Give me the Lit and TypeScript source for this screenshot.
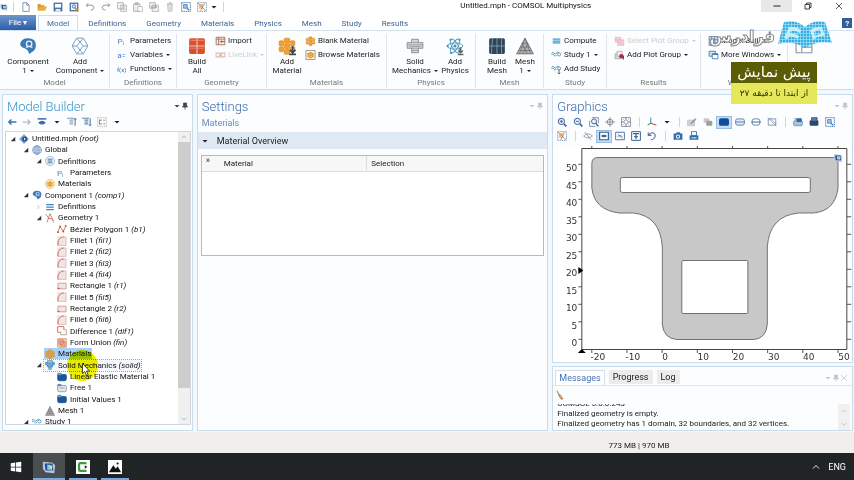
import { LitElement, html, svg, css, nothing } from "lit";
import { customElement, property } from "lit/decorators.js";
import { classMap } from "lit/directives/class-map.js";

/* Icons are drawn on a 16 x 16 canvas. */
const blocks = svg`<g fill="#f0a030" stroke="#d07f18" stroke-width=".5"><rect x="5.5" y="1" width="5" height="4.4" rx="1"/><rect x="1" y="3.4" width="4" height="4.4" rx="1"/><rect x="11" y="3.4" width="4" height="4.4" rx="1"/><rect x="5.5" y="6" width="5" height="4.4" rx="1"/><rect x="1" y="8.6" width="4" height="4.4" rx="1"/><rect x="11" y="8.6" width="4" height="4.4" rx="1"/><rect x="5.5" y="11" width="5" height="4.4" rx="1"/></g>`;
const waves = svg`<g fill="none" stroke="#3f8fb8" stroke-width="1.3"><path d="M0 8q2-4 4 0t4 0"/><path d="M0 5q2-3 4 0t4 0 4 0"/><circle cx="12" cy="7" r="2.6"/></g>`;
const fillet = svg`<path d="M1.500 15V9Q3 1.500 10 1.500h4.500V15z" fill="#efe6e4" stroke="#c9a9a2"/><path d="M1.500 15V10Q3 2 11 1.500" fill="none" stroke="#cf6a58" stroke-width="1.400"/><path d="M1 1.500h7M1.500 1v7" stroke="#dcc4be"/>`;
const domain = svg`<path d="M1 4q0-2 2-2h3l2 2h5q2 0 2 2v5q0 3-3 3H4q-3 0-3-3z" fill="#17589c" stroke="#0d4480"/><path d="M1 2h6v3H1z" fill="#6f9fcc"/>`;
const person = svg`<path d="M1 6q1-5 7-5 7 0 7 6 0 4-3 6l-3 2q-1-4-4-5-4-1-4-4z" fill="#3d78b8"/><circle cx="9" cy="6" r="2.400" fill="none" stroke="#e6f0fa" stroke-width="1.200"/><path d="M6 9h2M10 9h2" stroke="#e6f0fa" stroke-width="1"/>`;

const ICONS: Record<string, unknown> = {
  doc: svg`<path d="M3 1h6l4 4v10H3zM9 1v4h4" fill="#fff" stroke="#5f7f9f" stroke-width="1.2"/>`,
  open: svg`<path d="M1 13V3h4l2 2h5v2" fill="#d8982c"/><path d="M1 14l3-7h12l-3 7z" fill="#e9ab3d"/>`,
  save: svg`<path d="M1 1h14v14H1z" fill="#3c6cab"/><path d="M3 3h10v6H3z" fill="#fff"/><path d="M4 11h8v4H4z" fill="#dfe8f4"/>`,
  saveas: svg`<path d="M1 1h14v14H1z" fill="#3c6cab"/><path d="M3 3h10v10H3z" fill="#fff"/><circle cx="8" cy="7" r="3" fill="#b9d2ee" stroke="#3c6cab"/><path d="M9 9l6 6" stroke="#d08a2a" stroke-width="2.4"/>`,
  undo: svg`<path d="M5 2L2 5l3 3M2 5h7q5 0 5 4t-5 4" fill="none" stroke="#8c9098" stroke-width="1.5"/>`,
  redo: svg`<path d="M11 2l3 3-3 3M14 5H7q-5 0-5 4t5 4" fill="none" stroke="#8c9098" stroke-width="1.5"/>`,
  copy: svg`<path d="M1 1h9v10H1zM6 5h9v10H6z" fill="#f4f4f4" stroke="#a3a3a3" stroke-width="1.2"/><path d="M8 8h5M8 10h5M8 12h5" stroke="#b5b5b5"/>`,
  paste: svg`<path d="M1 3h10v12H1zM4 1h4v3H4z" fill="#eee" stroke="#a3a3a3" stroke-width="1.2"/><path d="M8 7h7v8H8z" fill="#fff" stroke="#a3a3a3"/>`,
  duplicate: svg`<path d="M1 1h9v9H1zM5 5h10v10H5z" fill="#f4f4f4" stroke="#a3a3a3" stroke-width="1.2"/><path d="M3 8h9l-2-2m2 2l-2 2" fill="none" stroke="#777"/>`,
  trash: svg`<path d="M4 4h8l-1 11H5z" fill="#ddd" stroke="#b5b5b5"/><path d="M3 3h10M6 1h4" stroke="#b5b5b5" stroke-width="1.4"/>`,
  select: svg`<path d="M1 1h14v14H1z" fill="none" stroke="#2f6db3" stroke-width="1.4" stroke-dasharray="2 1"/><path d="M4 4h6v6H4z" fill="#9dbfe6" stroke="#2f6db3"/><path d="M9 8l5 5-3 0z" fill="#245a9c"/>`,
  deselect: svg`<path d="M1 1h14v14H1z" fill="none" stroke="#5a84b8" stroke-width="1.2" stroke-dasharray="2 1"/><path d="M3 3h7v8H3z" fill="#e2c597"/><path d="M2 2l12 12M12 2L6 14" stroke="#c07a3a" stroke-width="1.2"/>`,
  param: svg`<text x="0" y="12" font-size="13" fill="#4a83bd">P</text><text x="8" y="15" font-size="9" fill="#4a83bd">i</text>`,
  vars: svg`<text x="0" y="12" font-size="12" fill="#4a83bd">a=</text>`,
  fx: svg`<text x="-1" y="12" font-size="10" fill="#2f6fb0">f(x)</text>`,
  importer: svg`<path d="M1 2h14v12H1zM1 5h14M5 2v12" fill="#fbe9e4" stroke="#a3705f" stroke-width="1.4"/><path d="M15 9H8l2-2M8 9l2 2" fill="none" stroke="#b5543c" stroke-width="1.6"/>`,
  link: svg`<path d="M1 5h6v6H1zM9 5h6v6H9zM5 8h6" fill="none" stroke="#e6b9b2" stroke-width="1.8"/>`,
  blocks,
  browse: svg`<path d="M.7.7h14.6v14.6H.7z" fill="#fff6e4" stroke="#8a8a8a" stroke-width="1.3"/><g transform="translate(2.5 2.5) scale(.7)">${blocks}</g>`,
  compute: svg`<path d="M2 4h12v2H2zM2 7h12v2H2zM2 10h12v2H2z" fill="#3b9ccc"/>`,
  waves,
  addwaves: svg`${waves}<path d="M12 9v7m-2-2l2 2 2-2" fill="none" stroke="#555" stroke-width="1.4"/>`,
  plotoff: svg`<path d="M1 2h9v8H1zM5 6h10v9H5z" fill="#f3c9d3" stroke="#e6b4c0"/>`,
  plotadd: svg`<path d="M1 6h9v8H1z" fill="#ddd" stroke="#888"/><path d="M4 2h8v8H4z" fill="#f4eef0" stroke="#999"/><circle cx="11" cy="10" r="3.6" fill="#c2264c"/><path d="M14 9v6" stroke="#444" stroke-width="2"/>`,
  grid: svg`<path d="M1 1h14v14H1zM5 1v14M10 1v14M1 6h14M1 11h14" fill="#dbe8f5" stroke="#54789e" stroke-width="1.3"/>`,
  windows: svg`<path d="M1 2h10v8H1z" fill="#cfe0f1" stroke="#3f74ab" stroke-width="1.3"/><path d="M6 6h9v8H6z" fill="#fff" stroke="#3f74ab" stroke-width="1.3"/><path d="M6 7h9" stroke="#3f74ab" stroke-width="2"/>`,
  desktop: svg`<path d="M1 1h14v13H1z" fill="#fff" stroke="#8d979f"/><path d="M1 4h14M6 4v10M6 9h9" stroke="#8d979f"/>`,
  person,
  addcomp: svg`<g fill="none" stroke="#7196bd" stroke-width=".8"><path d="M5 1h6l4 7-4 7H5L1 8z"/><path d="M5 1l6 7-6 7M11 1L5 8l6 7M1 8h4M11 8h4"/></g>`,
  build: svg`<rect x="1" y="1" width="14" height="14" rx="1.5" fill="#d9502e"/><path d="M8 1v14M1 8h14" stroke="#f4c3b4" stroke-width="1"/><path d="M2 3h5M2 10h5M9 3h5M9 10h5" stroke="#e98063" stroke-width="1"/>`,
  addmat: svg`${blocks}<path d="M13 8v6m-2.500-2.500l2.500 2.500 2.500-2.500M10 15.500h6" fill="none" stroke="#3c4a58" stroke-width="1.500"/>`,
  solid: svg`<path d="M5 2h6v3h4v5h-4v4H5v-4H1V5h4z" fill="#d4d6d8" stroke="#85898d" stroke-width=".8"/><path d="M5 5h6M1 7h14M3 8.500h10M5 10h6M5 12h6" stroke="#909498" stroke-width=".7"/>`,
  solidblue: svg`<path d="M4 1h8v3h3v4h-3v3h-2v4H6v-4H4V8H1V4h3z" fill="#9fc6e2" stroke="#357fae"/><path d="M1 5h14M3 8h10M5 11h6" stroke="#357fae" stroke-width="1.300"/>`,
  atom: svg`<g fill="none" stroke="#4b9ac0" stroke-width=".8"><ellipse cx="8" cy="8" rx="7" ry="2.700"/><ellipse cx="8" cy="8" rx="7" ry="2.700" transform="rotate(60 8 8)"/><ellipse cx="8" cy="8" rx="7" ry="2.700" transform="rotate(120 8 8)"/></g><g fill="#3f8fb8"><circle cx="8" cy="8" r="1.400"/><circle cx="4" cy="2.500" r="1"/><circle cx="12" cy="2.500" r="1"/><circle cx="1.500" cy="8" r="1"/><circle cx="4.500" cy="14" r="1"/></g><path d="M13 9v5m-2-2l2 2 2-2M10.500 15.500h5" fill="none" stroke="#59636c" stroke-width="1.300"/>`,
  buildmesh: svg`<rect x="1" y="1" width="14" height="14" rx="1.500" fill="#2c455c"/><path d="M8 1v14M1 8h14M4 1l-1 14M12 1v14" stroke="#8fa6ba" stroke-width=".7"/>`,
  mesh: svg`<path d="M8 1l7.500 14H.5z" fill="#b2b2b2" stroke="#747474" stroke-width=".8"/><path d="M5.500 5.700h5M3.800 9h8.500M2 12h12M8 1L3 15M8 1l5 14M5.500 5.700L10 15M10.500 5.700L6 15" fill="none" stroke="#696969" stroke-width=".6"/>`,
  root: svg`<path d="M8 1l7 7-7 7-7-7z" fill="#88abd0" stroke="#3a6da5"/><circle cx="9" cy="8" r="4" fill="#204f8c"/><path d="M8 6l3 2-3 2z" fill="#fff"/>`,
  globe: svg`<circle cx="8" cy="8" r="7" fill="#dfe9f5" stroke="#5d7fb1"/><path d="M1 8h14M8 1v14M2.500 4.500h11M2.500 11.500h11" stroke="#5d7fb1" stroke-width=".8"/><ellipse cx="8" cy="8" rx="3.500" ry="7" fill="none" stroke="#5d7fb1" stroke-width=".8"/>`,
  defsround: svg`<circle cx="8" cy="8" r="7.200" fill="#fff" stroke="#6c8fb9"/><path d="M4 5h8M4 8h8M4 11h8" stroke="#2a6db0" stroke-width="1.600"/>`,
  defs: svg`<path d="M2 4h12M2 8h12M2 12h12" stroke="#3d87b5" stroke-width="2"/>`,
  matround: svg`<circle cx="8" cy="8" r="7.200" fill="#fff3d6" stroke="#e2a43f"/><g transform="translate(3 3) scale(.63)">${blocks}</g>`,
  geom: svg`<path d="M3 15L8 1l6 14M5 9q5-2 9 3M1 2l5 6" fill="none" stroke="#d2583d" stroke-width="1.200"/>`,
  bezier: svg`<path d="M1 13L5 4l5 8 4-9" fill="none" stroke="#b5533f" stroke-width="1.200"/><g fill="#c34b32"><circle cx="1.800" cy="13" r="1.500"/><circle cx="5" cy="4" r="1.500"/><circle cx="10" cy="12" r="1.500"/><circle cx="14" cy="3" r="1.500"/></g>`,
  fillet,
  rect: svg`<path d="M1.500 3.500h13v9h-13z" fill="#f1e4e1" stroke="#cf8a7d" stroke-width="1.200"/><path d="M1 12h3" stroke="#c34b32" stroke-width="2"/>`,
  diff: svg`<path d="M1 1h10v9H1z" fill="#fff" stroke="#d0604a" stroke-width="1.400"/><path d="M6 10v4h9V6h-4" fill="#fff" stroke="#a78d88" stroke-width="1.200"/>`,
  union: svg`<path d="M1 1h14v14H1z" fill="#f3d2b4" stroke="#d07f5b"/><path d="M3 3h7v7H3zM6 6h7v7H6z" fill="#efb7a3" stroke="#c9654d"/>`,
  domain,
  free: svg`<path d="M1 4q0-2 2-2h3l2 2h5q2 0 2 2v5q0 3-3 3H4q-3 0-3-3z" fill="#dfe6ee" stroke="#7b8a9b" stroke-width="1.200"/><path d="M1 2h6v3H1z" fill="#6c83a0"/><path d="M4 8h8" stroke="#7b8a9b"/>`,
  left: svg`<path d="M15 8H3m4-4L3 8l4 4" fill="none" stroke="#3a77b5" stroke-width="2.400"/>`,
  right: svg`<path d="M1 8h12M9 4l4 4-4 4" fill="none" stroke="#b9bcc0" stroke-width="2"/>`,
  eyebar: svg`<path d="M1 3h14" stroke="#386fa8" stroke-width="2.400"/><path d="M2 9q6-6 12 0-6 6-12 0z" fill="#386fa8"/>`,
  treeup: svg`<path d="M0 2h11M4 5h6M4 8h6M4 11h6" stroke="#8494a7" stroke-width="1.600"/><path d="M13 14V2m-2 2l2-2 2 2" fill="none" stroke="#3a6aa0" stroke-width="1.500"/>`,
  treedown: svg`<path d="M0 2h11M4 5h6M4 8h6M4 11h6" stroke="#6484a7" stroke-width="1.800"/><path d="M13 2v12m-2-2l2 2 2-2" fill="none" stroke="#3a6aa0" stroke-width="1.500"/>`,
  treebox: svg`<path d="M1 1h14v14H1z" fill="#fff" stroke="#9a9a9a" stroke-dasharray="2 1"/><path d="M4 4v8M4 5h4M4 11h4M10 5h3M10 11h3" stroke="#777" stroke-width="1.400"/>`,
  zoomin: svg`<circle cx="7" cy="7" r="5" fill="#e9f1fa" stroke="#35609a" stroke-width="1.600"/><path d="M11 11l4 4" stroke="#35609a" stroke-width="2.400"/><path d="M4.500 7h5M7 4.500v5" stroke="#35609a" stroke-width="1.400"/>`,
  zoomout: svg`<circle cx="7" cy="7" r="5" fill="#e9f1fa" stroke="#35609a" stroke-width="1.600"/><path d="M11 11l4 4" stroke="#35609a" stroke-width="2.400"/><path d="M4.500 7h5" stroke="#35609a" stroke-width="1.400"/>`,
  zoombox: svg`<path d="M1 6v9h9M5 1h10v9" fill="none" stroke="#5e7796" stroke-width="1.200"/><circle cx="8" cy="7" r="4" fill="#e9f1fa" stroke="#35609a" stroke-width="1.500"/><path d="M11 10l4 5" stroke="#35609a" stroke-width="2"/>`,
  target: svg`<circle cx="8" cy="8" r="4.500" fill="none" stroke="#6f7c8b" stroke-width="1.300"/><path d="M8 0v16M0 8h16" stroke="#6f7c8b" stroke-width="1.200"/>`,
  extents: svg`<path d="M1 1h14v14H1z" fill="#fff" stroke="#6f7c8b" stroke-width="1.300"/><path d="M8 1v5M8 10v5M1 8h5M10 8h5" stroke="#6f7c8b" stroke-width="1.600"/><path d="M4 4l2 2M12 4l-2 2M4 12l2-2M12 12l-2-2" stroke="#6f7c8b" stroke-width="1.300"/>`,
  axes: svg`<path d="M6 1v9" stroke="#3b79b5" stroke-width="1.500"/><path d="M6 10l-5 3" stroke="#3a9a4d" stroke-width="1.800"/><path d="M6 10l9 3" stroke="#c2413b" stroke-width="1.600"/>`,
  pencil: svg`<path d="M1 5h11v9H1z" fill="#d5d5d5" stroke="#b5b5b5"/><path d="M5 10l8-8 2 2-8 8z" fill="#9a9a9a"/>`,
  stack: svg`<rect x="1" y="2" width="9" height="7" rx="2" fill="#c9c9c9"/><rect x="5" y="6" width="10" height="8" rx="2" fill="#9f9f9f"/>`,
  solidbox: svg`<rect x="0" y="2" width="16" height="12" rx="3" fill="#0f4f97"/>`,
  linebox: svg`<rect x="1" y="3" width="14" height="10" rx="3" fill="#dfeaf6" stroke="#4a6f9b" stroke-width="1.300"/><path d="M1 8h14" stroke="#4a6f9b" stroke-width="1.300"/>`,
  pointbox: svg`<rect x="2" y="3" width="12" height="10" rx="3" fill="#fff" stroke="#4a6f9b" stroke-width="1.300"/><path d="M0 8h16" stroke="#4a6f9b" stroke-width="1.600"/>`,
  nobox: svg`<path d="M2 3h12v10H2z" fill="none" stroke="#75879d" stroke-width="1.300"/><path d="M1 1l14 14M4 1l11 11" stroke="#75879d"/>`,
  scene: svg`<rect x="1" y="6" width="14" height="8" rx="2" fill="#a9c3df" stroke="#4a77aa"/><path d="M6 2h8v6H6z" fill="#2f68ab"/><path d="M2 3h4v3" fill="none" stroke="#4a77aa" stroke-width="1.500"/>`,
  scenedark: svg`<rect x="1" y="5" width="14" height="9" rx="2" fill="#2d4767"/><path d="M4 1h9v6H4z" fill="#5a7da8" stroke="#243a56"/>`,
  noeye: svg`<path d="M1 8q7-7 14 0-7 6-14 0z" fill="none" stroke="#8f8f8f" stroke-width="1.300"/><path d="M3 2l10 12" stroke="#8f8f8f" stroke-width="1.500"/>`,
  eyebox: svg`<path d="M1 2h14v12H1z" fill="#fff" stroke="#345f92" stroke-width="1.800"/><path d="M3 8q5-4 10 0-5 4-10 0z" fill="#345f92"/>`,
  slashbox: svg`<path d="M1 2h14v12H1z" fill="#fff" stroke="#5676a5" stroke-width="1.600"/><path d="M4 9q4-4 8 0M5 5l6 7" fill="none" stroke="#5676a5" stroke-width="1.300"/>`,
  screenbox: svg`<path d="M1 1h14v14H1z" fill="#fff" stroke="#42658f" stroke-width="1.600"/><path d="M3 4h10M8 5v8M5 9h6" stroke="#42658f" stroke-width="2"/>`,
  reset: svg`<path d="M2 2v5h5M3 6q3-4 7-3 4 2 3 6-2 5-7 5" fill="none" stroke="#5b6fa5" stroke-width="1.700"/>`,
  camera: svg`<path d="M1 4h4l1-2h5l1 2h3v10H1z" fill="#2e6db0"/><circle cx="8" cy="9" r="3.300" fill="#fff"/><circle cx="8" cy="9" r="1.800" fill="#2e6db0"/>`,
  printer: svg`<path d="M4 1h8v6H4z" fill="#fff" stroke="#2e6db0" stroke-width="1.400"/><path d="M1 7h14v7H1z" fill="#2e6db0"/><path d="M4 11h8" stroke="#fff" stroke-width="1.400"/>`,
  broom: svg`<path d="M3 1l4 8" stroke="#86551f" stroke-width="1.300"/><path d="M6 8l2-1 5 7-3 1q-3-3-4-7z" fill="#d9ab70" stroke="#86551f" stroke-width=".8"/>`,
  help: svg`<path d="M0 0h16v16H0z" fill="#2f5d9d"/><text x="5" y="13" font-size="13" font-weight="700" fill="#fff">?</text>`,
  pin: svg`<path d="M5 2h6v7h2v1H3V9h2zM8 10v5" fill="currentColor" stroke="currentColor" stroke-width="1.500"/>`,
  down: svg`<path d="M3 6h10l-5 5z" fill="currentColor"/>`,
  close: svg`<path d="M2 2l12 12M14 2L2 14" stroke="currentColor" stroke-width="1.500"/>`,
  restore: svg`<path d="M2 5h9v9H2zM5 5V2h9v9h-3" fill="none" stroke="currentColor" stroke-width="1.700"/>`,
  minus: svg`<path d="M1 8h14" stroke="currentColor" stroke-width="2"/>`,
  chevup: svg`<path d="M2 11l6-6 6 6" fill="none" stroke="currentColor" stroke-width="1.800"/>`,
  chevdown: svg`<path d="M2 5l6 6 6-6" fill="none" stroke="currentColor" stroke-width="1.800"/>`,
  expanded: svg`<path d="M14 2v12H2z" fill="#333"/>`,
  collapsed: svg`<path d="M5 3l5 5-5 5z" fill="#fff" stroke="#aaa"/>`,
  win: svg`<path d="M1 3l6-1v5.500H1zM8 1.900L15 1v6.500H8zM1 8.500h6V14l-6-1zM8 8.500h7V15l-7-1z" fill="#fff"/>`,
  comsol: svg`<path d="M1 2l11 1 3 3-1 9-10-1-3-4z" fill="#b9c9dd"/><path d="M3 4h9l1 8H4z" fill="#1d4fa3"/><path d="M6 5l5 1v5H6z" fill="#7fd0e6"/><path d="M8 6l4 1-1 5z" fill="#e8e15a"/>`,
  camtasia: svg`<path d="M0 0h16v16H0z" fill="#fff"/><path d="M12 3.500H5q-1.500 0-1.500 1.500v6q0 1.500 1.500 1.500h7" fill="none" stroke="#3f9b3f" stroke-width="2.600"/><path d="M10 6l3 2-3 2z" fill="#222"/>`,
  photos: svg`<path d="M0 0h16v16H0z" fill="#fff"/><path d="M1 14l5-8 3 4 2-3 4 7z" fill="#111"/><circle cx="11" cy="4" r="1.200" fill="#111"/>`,
};

const icon = (name: string, cls = "i10") =>
  html`<svg class="ic ${cls}" viewBox="0 0 16 16" aria-hidden="true">${ICONS[name]}</svg>`;

const base = css`
  :host { display: block; box-sizing: border-box; min-width: 0; }
  * { box-sizing: border-box; }
  button { font: inherit; color: inherit; background: none; border: 0; margin: 0; padding: 0; }
  h2, ul, p { margin: 0; padding: 0; font-weight: 400; }
  .ic { display: block; flex: none; overflow: visible; }
  .i6 { width: 6px; height: 6px; }
  .i8 { width: 8px; height: 8px; }
  .i10 { width: 10px; height: 10px; }
  .i12 { width: 12px; height: 12px; }
  .i14 { width: 14px; height: 14px; }
  .i18 { width: 18px; height: 18px; }
  .title { font-size: 13px; line-height: 18px; font-weight: 300; color: #3f6db0; }
  .tools { display: flex; align-items: center; color: #444; }
  .faint { color: #c3c7cc; }
  .spacer { flex: 1; }
`;

/* ---------- ribbon ---------- */
type Big = { icon: string; lines: string[]; menu?: boolean; w: "wide" | "mid" | "narrow" };
type Small = { icon: string; text: string; menu?: boolean; off?: boolean };
type Group = { label: string; snug?: boolean; big?: Big[]; small?: Small[] };

const GROUPS: Group[] = [
  { label: "Model", snug: true, big: [
    { icon: "person", lines: ["Component", "1"], menu: true, w: "wide" },
    { icon: "addcomp", lines: ["Add", "Component"], menu: true, w: "wide" }] },
  { label: "Definitions", small: [
    { icon: "param", text: "Parameters" }, { icon: "vars", text: "Variables", menu: true }, { icon: "fx", text: "Functions", menu: true }] },
  { label: "Geometry", snug: true, big: [{ icon: "build", lines: ["Build", "All"], w: "mid" }],
    small: [{ icon: "importer", text: "Import" }, { icon: "link", text: "LiveLink", menu: true, off: true }] },
  { label: "Materials", snug: true, big: [{ icon: "addmat", lines: ["Add", "Material"], w: "mid" }],
    small: [{ icon: "blocks", text: "Blank Material" }, { icon: "browse", text: "Browse Materials" }] },
  { label: "Physics", snug: true, big: [
    { icon: "solid", lines: ["Solid", "Mechanics"], menu: true, w: "wide" },
    { icon: "atom", lines: ["Add", "Physics"], w: "narrow" }] },
  { label: "Mesh", big: [
    { icon: "buildmesh", lines: ["Build", "Mesh"], w: "narrow" },
    { icon: "mesh", lines: ["Mesh", "1"], menu: true, w: "narrow" }] },
  { label: "Study", small: [
    { icon: "compute", text: "Compute" }, { icon: "waves", text: "Study 1", menu: true }, { icon: "addwaves", text: "Add Study" }] },
  { label: "Results", small: [
    { icon: "plotoff", text: "Select Plot Group", menu: true, off: true }, { icon: "plotadd", text: "Add Plot Group", menu: true }] },
  { label: "Windows", small: [
    { icon: "grid", text: "Model Builder" }, { icon: "windows", text: "More Windows", menu: true }] },
  { label: "", snug: true, big: [{ icon: "desktop", lines: [], w: "narrow" }] },
];

@customElement("app-ribbon")
class AppRibbon extends LitElement {
  static styles = [base, css`
    :host { display: grid; grid-template-columns: 110fr 67fr 90fr 120fr 89fr 68fr 63fr 94fr 87fr 66fr; height: 60px; padding: 3px 0 1px; background: #fcfdfe; border-top: 1px solid #d5e1ee; border-bottom: 1px solid #d3dce6; font-size: 8px; color: #222; }
    .group { display: flex; flex-direction: column; min-width: 0; border-right: 1px solid #dfe5ec; white-space: nowrap; }
    .group:last-child { border-right: 0; }
    .body { flex: 1; display: flex; align-items: flex-start; padding-left: 7px; }
    .snug { padding-left: 2px; }
    .big { display: flex; flex-direction: column; align-items: center; line-height: 9px; flex: none; }
    .big .pic { height: 23px; display: flex; align-items: center; }
    .wide { width: 52px; } .mid { width: 36px; } .narrow { width: 28px; }
    .smalls { display: flex; flex-direction: column; }
    .small { display: flex; align-items: center; gap: 2px; height: 14px; line-height: 12px; }
    .small .ic { width: 11px; }
    .off { color: #cdcdcd; }
    .menu::after { content: ""; display: inline-block; margin-left: 3px; vertical-align: middle; border: 2px solid transparent; border-top-color: currentColor; border-bottom: 0; }
    .label { text-align: center; color: #777; height: 10px; line-height: 10px; }
  `];
  render() {
    return GROUPS.map((g) => html`<div class="group" role="group" aria-label=${g.label || "Desktop"}>
      <div class=${classMap({ body: true, snug: !!g.snug })}>
        ${g.big?.map((b) => html`<button class="big ${b.w}"><span class="pic">${icon(b.icon, "i18")}</span>
          ${b.lines.map((l, i) => html`<span class=${classMap({ menu: !!b.menu && i === b.lines.length - 1 })}>${l}</span>`)}</button>`)}
        ${g.small ? html`<div class="smalls">${g.small.map((s) => html`<button class=${classMap({ small: true, off: !!s.off })} ?disabled=${s.off}>${icon(s.icon)}<span class=${classMap({ menu: !!s.menu })}>${s.text}</span></button>`)}</div>` : nothing}
      </div>
      <div class="label">${g.label}</div>
    </div>`);
  }
}

/* ---------- model tree ---------- */
type Node = { d: number; icon: string; text: string; tag?: string; arrow?: "expanded" | "collapsed"; state?: "selected" | "target" };
const NODES: Node[] = [
  { d: 0, icon: "root", text: "Untitled.mph", tag: "root", arrow: "expanded" },
  { d: 1, icon: "globe", text: "Global", arrow: "expanded" },
  { d: 2, icon: "defsround", text: "Definitions", arrow: "expanded" },
  { d: 3, icon: "param", text: "Parameters" },
  { d: 2, icon: "matround", text: "Materials" },
  { d: 1, icon: "person", text: "Component 1", tag: "comp1", arrow: "expanded" },
  { d: 2, icon: "defs", text: "Definitions", arrow: "collapsed" },
  { d: 2, icon: "geom", text: "Geometry 1", arrow: "expanded" },
  { d: 3, icon: "bezier", text: "Bézier Polygon 1", tag: "b1" },
  { d: 3, icon: "fillet", text: "Fillet 1", tag: "fil1" },
  { d: 3, icon: "fillet", text: "Fillet 2", tag: "fil2" },
  { d: 3, icon: "fillet", text: "Fillet 3", tag: "fil3" },
  { d: 3, icon: "fillet", text: "Fillet 4", tag: "fil4" },
  { d: 3, icon: "rect", text: "Rectangle 1", tag: "r1" },
  { d: 3, icon: "fillet", text: "Fillet 5", tag: "fil5" },
  { d: 3, icon: "rect", text: "Rectangle 2", tag: "r2" },
  { d: 3, icon: "fillet", text: "Fillet 6", tag: "fil6" },
  { d: 3, icon: "diff", text: "Difference 1", tag: "dif1" },
  { d: 3, icon: "union", text: "Form Union", tag: "fin" },
  { d: 2, icon: "blocks", text: "Materials", state: "selected" },
  { d: 2, icon: "solidblue", text: "Solid Mechanics", tag: "solid", arrow: "expanded", state: "target" },
  { d: 3, icon: "domain", text: "Linear Elastic Material 1" },
  { d: 3, icon: "free", text: "Free 1" },
  { d: 3, icon: "domain", text: "Initial Values 1" },
  { d: 2, icon: "mesh", text: "Mesh 1" },
  { d: 1, icon: "waves", text: "Study 1", arrow: "expanded" },
];

@customElement("model-tree")
class ModelTree extends LitElement {
  static styles = [base, css`
    :host { display: flex; overflow: hidden; border: 1px solid #cfd6de; background: #fff; font-size: 8px; line-height: 11px; color: #111; }
    ul { flex: 1; min-width: 0; list-style: none; padding-top: 1px; }
    li { display: flex; align-items: center; height: 11px; white-space: nowrap; }
    li:nth-child(3n) { height: 12px; }
    .d0 { padding-left: 2px; } .d1 { padding-left: 15px; } .d2 { padding-left: 28px; } .d3 { padding-left: 40px; }
    .arrow { width: 10px; display: flex; justify-content: center; }
    .node { display: flex; align-items: center; gap: 3px; height: 11px; padding: 0 1px; }
    .selected { background: #a9d1f7; }
    .target { outline: 1px dotted #7da7d8; background: #f5f9fe; }
    .bar { width: 12px; background: #f0f0f0; display: flex; flex-direction: column; align-items: center; color: #9a9a9a; padding: 2px 0; gap: 2px; }
    .thumb { flex: 249; width: 100%; background: #cdcdcd; }
    .rest { flex: 24; }
  `];
  render() {
    return html`<ul role="tree" aria-label="Model tree">${NODES.map((n) => html`<li class="d${n.d}" role="treeitem" aria-level=${n.d + 1} aria-selected=${n.state === "selected"}>
      <span class="arrow">${n.arrow ? icon(n.arrow, "i6") : nothing}</span>
      <span class="node ${n.state ?? ""}">${icon(n.icon)}<span>${n.text}${n.tag ? html` <i>(${n.tag})</i>` : nothing}</span></span></li>`)}</ul>
      <div class="bar">${icon("chevup", "i6")}<div class="thumb"></div><div class="rest"></div>${icon("chevdown", "i6")}</div>`;
  }
}

/* ---------- geometry plot ---------- */
const X = (v: number) => 108.8 + v * 3.517;
const Y = (v: number) => 193.3 - v * 3.5;
const XT = [-20, -10, 0, 10, 20, 30, 40, 50];
const YT = [0, 5, 10, 15, 20, 25, 30, 35, 40, 45, 50];

@customElement("geometry-plot")
class GeometryPlot extends LitElement {
  static styles = [base, css`
    :host { flex: 1; display: flex; min-height: 0; background: #fff; }
    .plot { display: block; width: 100%; height: 100%; }
    .num { font: 9px "DejaVu Sans", sans-serif; fill: #333; }
  `];
  render() {
    return html`<svg class="plot" viewBox="0 0 298 216" role="img" aria-label="Geometry of the component">
      <g stroke="#555" stroke-width="1">
        ${XT.map((t) => svg`<path d="M${X(t)} 0v3M${X(t)} 203v4"/>`)}
        ${YT.map((t) => svg`<path d="M25 ${Y(t)}h4M293 ${Y(t)}h5"/>`)}
      </g>
      <path d="M28.500 2.500h265v201h-265z" fill="#fff" stroke="#444"/>
      <path fill="#c8c8c8" stroke="#555" stroke-width=".8" fill-rule="evenodd" d="M44.500 11.500H284.700V42Q282 65 260 67H245Q216 70 214 101V178Q213 192 201 193.500H123Q110 192 109 178V101Q107 70 80 67H66Q41 64 38.500 42V17.500Q38.500 11.500 44.500 11.500z
        M69 31.500H255Q257 31.500 257 33.500V44.500Q257 46.500 255 46.500H69Q67 46.500 67 44.500V33.500Q67 31.500 69 31.500z
        M129.500 114.500H193.500Q194.500 114.500 194.500 115.500V166.500Q194.500 167.500 193.500 167.500H129.500Q128.500 167.500 128.500 166.500V115.500Q128.500 114.500 129.500 114.500z"/>
      <path d="M25 121l5 3.500-5 3.500zM28.500 203l4 4h-8z" fill="#000"/>
      ${YT.map((t) => svg`<text class="num" x="24" y=${Y(t) + 7} text-anchor="end">${t}</text>`)}
      ${XT.map((t) => svg`<text class="num" x=${X(t) + (t ? 6 : 3)} y="214" text-anchor="middle">${t}</text>`)}
      <g transform="translate(280 7) scale(.6)">${ICONS.comsol}</g>
    </svg>`;
  }
}

/* ---------- shell ---------- */
const QUICK = ["doc", "open", "save", "saveas", "undo", "redo", "copy", "paste", "duplicate", "trash", "select", "deselect"];
const TABS = ["Model", "Definitions", "Geometry", "Materials", "Physics", "Mesh", "Study", "Results"];
const BAR1 = ["zoomin", "zoomout", "zoombox", "target", "extents", "|", "axes", "v", "|", "pencil", "stack", "*solidbox", "linebox", "pointbox", "nobox", "|", "scene", "scenedark", "select"];
const BAR2 = ["deselect", "|", "noeye", "*eyebox", "slashbox", "screenbox", "reset", "|", "camera", "printer"];

@customElement("app-root")
class AppRoot extends LitElement {
  @property() memory = "773 MB | 970 MB";

  static styles = [base, css`
    :host { position: relative; display: flex; flex-direction: column; height: 100vh; overflow: hidden; background: #fff; font-family: Roboto, "Noto Sans", sans-serif; font-size: 8px; color: #222; }
    .titlebar { display: grid; grid-template-columns: 459fr auto 262fr; height: 15px; }
    .quick { display: flex; align-items: center; height: 13px; }
    .quick button { width: 16px; display: flex; justify-content: center; }
    .sep { width: 10px; height: 10px; display: flex; justify-content: center; }
    .sep::before { content: ""; width: 1px; height: 100%; background: #d2d6db; }
    .name { line-height: 12px; color: #111; }
    .winbtns { display: flex; justify-content: flex-end; height: 12px; }
    .winbtns button { width: 31px; display: flex; align-items: center; justify-content: center; }
    .winbtns .min { background: #e8e8e8; }
    .tabs { display: flex; height: 15px; align-items: stretch; padding-right: 2px; }
    .file { width: 36px; margin-right: 2px; color: #fff; background: linear-gradient(#6f97cd, #2b5da8); }
    .tab { padding: 0 9px; color: #3d6291; border: 1px solid transparent; border-bottom: 0; line-height: 15px; }
    .tab.on { border-color: #cfdcea; background: #fcfdfe; color: #3f6ba6; padding: 0 8px; }
    .work { flex: 1; min-height: 0; display: grid; grid-template-columns: 191fr 352fr 301fr; gap: 4px; padding: 4px 1px 1px 2px; background: #f4f8fc; }
    .pane { display: flex; flex-direction: column; min-width: 0; min-height: 0; border: 1px solid #c8ddec; background: #fbfdff; }
    .head { display: flex; align-items: flex-start; justify-content: space-between; height: 20px; padding: 3px 3px 0 4px; }
    .head .tools { height: 16px; }
    .treebar { display: flex; align-items: center; height: 16px; padding: 0 0 2px 1px; }
    .treebar button { width: 15px; display: flex; justify-content: center; }
    .title.sky { color: #3b93c9; }
    model-tree { flex: 1; min-height: 0; margin: 0 1px 5px 2px; }
    .sub { font-size: 9px; line-height: 16px; color: #6a8bbb; padding-left: 4px; }
    .section { display: flex; align-items: center; gap: 8px; width: 100%; height: 17px; margin-top: 1px; padding-left: 3px; background: #dfe9f4; font-size: 9px; color: #222; }
    .grid { margin: 6px 3px 0; height: 101px; border: 1px solid #b5b9bd; background: #fff; }
    table { width: 100%; border-collapse: collapse; table-layout: fixed; }
    th { height: 15px; padding: 0 0 0 4px; text-align: left; font-weight: 400; background: #f7f7f7; border-bottom: 1px solid #dcdcdc; border-right: 1px solid #dcdcdc; }
    th:last-child { border-right: 0; }
    .c0 { width: 18px; border-right: 0; font-size: 9px; vertical-align: top; line-height: 9px; }
    .c1 { width: 147px; }
    .right { display: grid; grid-template-rows: 269fr 65fr; gap: 3px; min-width: 0; min-height: 0; }
    .bar { display: flex; align-items: center; height: 14px; padding-left: 1px; }
    .bar button { width: 16px; height: 13px; display: flex; align-items: center; justify-content: center; flex: none; }
    .bar .on { background: #c5dcf4; outline: 1px solid #9bbfe4; outline-offset: -1px; }
    .bar .caret { width: 14px; }
    geometry-plot { margin-top: 3px; }
    .msgtabs { display: flex; flex: none; align-items: flex-end; gap: 4px; height: 19px; padding: 0 4px 0 2px; border-bottom: 1px solid #dbe5ef; font-size: 9px; line-height: 14px; }
    .msgtabs .tabx { padding: 0 4px; background: #ececec; margin-bottom: 1px; }
    .msgtabs .tabx.on { padding: 0 3px; background: #fff; color: #4272b5; border: 1px solid #d3dfec; border-bottom: 0; margin-bottom: 0; }
    .msgtabs .tools { height: 14px; }
    .clear { height: 18px; padding: 4px 2px; flex: none; }
    .log { flex: 1; min-height: 0; display: flex; justify-content: space-between; overflow: hidden; }
    .lines { display: flex; flex-direction: column; justify-content: flex-end; padding-left: 4px; line-height: 10px; white-space: nowrap; overflow: hidden; padding-bottom: 1px; }
    .scroll { width: 12px; margin-right: 2px; background: #f0f0f0; color: #b5b5b5; display: flex; flex-direction: column; align-items: center; justify-content: space-around; }
    .status { height: 21px; display: flex; align-items: center; justify-content: center; background: #f1efee; padding: 5px 0 0 424px; }
    .taskbar { height: 27px; display: flex; align-items: stretch; background: #202425; color: #fff; font-size: 9px; }
    .taskbar button { width: 32px; margin-right: 1px; display: flex; align-items: center; justify-content: center; }
    .taskbar .run { border-bottom: 2px solid #76a9dd; padding-top: 2px; width: 28px; margin: 0 2px; }
    .taskbar .now { width: 32px; margin-left: 0; background: #4b4e50; }
    .tray { display: flex; align-items: center; gap: 8px; padding-right: 8px; }
    .badge { position: absolute; right: 37px; top: 62px; width: 86px; direction: rtl; text-align: center; white-space: nowrap; font-family: "DejaVu Sans", sans-serif; font-weight: 700; }
    .badge p:first-child { background: #5c5c05; color: #fff; font-size: 15px; line-height: 21px; }
    .badge p:last-child { background: #e6e75a; color: #33330a; font-size: 9px; line-height: 21px; }
    .brand { position: absolute; right: 21px; top: 19px; display: flex; align-items: flex-start; gap: 2px; }
    .brand .word { font: 700 16px "DejaVu Sans", sans-serif; line-height: 36px; color: #fff; -webkit-text-stroke: 1px #888; }
    .book { width: 56px; height: 30px; }
    .halo { position: absolute; left: 67px; top: 350px; width: 31px; height: 31px; border-radius: 50%; background: #eef000; mix-blend-mode: multiply; }
    .cursor { position: absolute; left: 82px; top: 363px; width: 8px; height: 13px; }
  `];

  private bar(items: string[]) {
    return html`<div class="bar">${items.map((n) => {
      if (n === "|") return html`<span class="sep"></span>`;
      if (n === "v") return html`<button class="caret" aria-label="View menu">${icon("down", "i8")}</button>`;
      const on = n.startsWith("*");
      const k = on ? n.slice(1) : n;
      return html`<button class=${classMap({ on })} aria-label=${k}>${icon(k)}</button>`;
    })}</div>`;
  }

  render() {
    return html`
      <header class="titlebar">
        <div class="quick">${icon("comsol", "i8")}<span class="sep"></span>
          ${QUICK.map((q) => html`<button aria-label=${q}>${icon(q)}</button>`)}
          ${icon("down", "i8")}<span class="sep"></span></div>
        <div class="name">Untitled.mph - COMSOL Multiphysics</div>
        <div class="winbtns"><button class="min" aria-label="Minimize">${icon("minus", "i8")}</button><button aria-label="Restore">${icon("restore", "i8")}</button><button aria-label="Close">${icon("close", "i8")}</button></div>
      </header>
      <nav class="tabs"><button class="file">File ▾</button>
        ${TABS.map((t, i) => html`<button class=${classMap({ tab: true, on: i === 0 })}>${t}</button>`)}
        <span class="spacer"></span><button aria-label="Help">${icon("help")}</button></nav>
      <app-ribbon></app-ribbon>
      <main class="work">
        <section class="pane">
          <div class="head"><h2 class="title sky">Model Builder</h2><div class="tools">${icon("down", "i8")}${icon("pin", "i8")}</div></div>
          <div class="treebar">${["left", "right", "eyebar"].map((n) => html`<button aria-label=${n}>${icon(n)}</button>`)}<button aria-label="Show menu">${icon("down", "i8")}</button>
            ${["treeup", "treedown", "treebox"].map((n) => html`<button aria-label=${n}>${icon(n)}</button>`)}<button aria-label="Tree menu">${icon("down", "i8")}</button></div>
          <model-tree></model-tree>
        </section>
        <section class="pane">
          <div class="head"><h2 class="title">Settings</h2><div class="tools faint">${icon("down", "i8")}${icon("pin", "i8")}</div></div>
          <p class="sub">Materials</p>
          <button class="section">${icon("down", "i8")}Material Overview</button>
          <div class="grid"><table><thead><tr><th class="c0">»</th><th class="c1">Material</th><th>Selection</th></tr></thead></table></div>
        </section>
        <div class="right">
          <section class="pane">
            <div class="head"><h2 class="title">Graphics</h2><div class="tools faint">${icon("down", "i8")}${icon("pin", "i8")}</div></div>
            ${this.bar(BAR1)}${this.bar(BAR2)}
            <geometry-plot></geometry-plot>
          </section>
          <section class="pane">
            <div class="msgtabs"><button class="tabx on">Messages</button><button class="tabx">Progress</button><button class="tabx">Log</button><span class="spacer"></span>
              <div class="tools faint">${icon("down", "i8")}${icon("pin", "i8")}${icon("close", "i8")}</div></div>
            <button class="clear" aria-label="Clear messages">${icon("broom")}</button>
            <div class="log"><div class="lines"><p>COMSOL 5.0.0.243</p><p>Finalized geometry is empty.</p><p>Finalized geometry has 1 domain, 32 boundaries, and 32 vertices.</p></div>
              <div class="scroll">${icon("chevup", "i6")}${icon("chevdown", "i6")}</div></div>
          </section>
        </div>
      </main>
      <footer class="status">${this.memory}</footer>
      <nav class="taskbar"><button aria-label="Start">${icon("win", "i12")}</button><button class="run now" aria-label="COMSOL">${icon("comsol", "i14")}</button><button class="run" aria-label="Recorder">${icon("camtasia", "i14")}</button><button class="run" aria-label="Photos">${icon("photos", "i14")}</button>
        <span class="spacer"></span><div class="tray">${icon("chevup", "i8")}<span>ENG</span></div></nav>
      <div class="brand"><span class="word" lang="fa">فرادرس</span>
        <svg class="book" viewBox="0 0 56 30" aria-hidden="true"><defs><pattern id="px" width="3" height="3" patternUnits="userSpaceOnUse"><path d="M0 0h3v3H0z" fill="#a5dff6"/><path d="M0 0h2.300v2.300H0z" fill="#35aee2"/></pattern></defs>
        <path d="M7 3q12-3 21 5 9-8 20-5l7 21q-15-3-27 5-12-8-27-4z" fill="url(#px)"/><path d="M12 8q7-1 12 3l-1 3q-5-3-9-2l-1 2q5 0 9 3l-1 3q-5-3-9-2l-2 2-3-1zM33 11q6-4 12-3l3 9q-6-1-12 4zM37 13l1 4q3-2 6-2l-1-4q-3 0-6 2z" fill="#c9ecf9" fill-rule="evenodd"/></svg></div>
      <div class="badge" lang="fa"><p>پیش نمایش</p><p>از ابتدا تا دقیقه ۲۷</p></div>
      <div class="halo"></div>
      <svg class="cursor" viewBox="0 0 8 13" aria-hidden="true"><path d="M.5.5v10l2.300-2 1.700 4 1.700-.7-1.700-3.800h3z" fill="#fff" stroke="#222" stroke-width=".8"/></svg>`;
  }
}
